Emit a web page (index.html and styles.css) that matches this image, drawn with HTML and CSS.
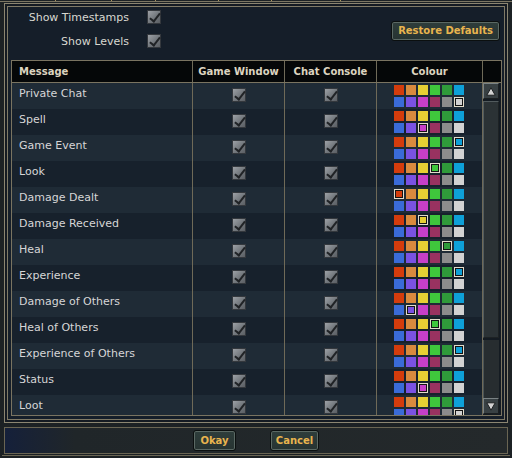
FILE: index.html
```html
<!DOCTYPE html>
<html>
<head>
<meta charset="utf-8">
<link rel="stylesheet" href="styles.css">
</head>
<body>
<div class="tabs"><i></i><i></i><i></i><i></i><i></i><i></i></div>
<div class="window">
  <div class="panel">
    <div class="top">
      <div class="opts">
        <span class="lbl">Show Timestamps</span><span class="cb"></span>
        <span class="lbl">Show Levels</span><span class="cb"></span>
      </div>
      <button class="btn restore">Restore Defaults</button>
    </div>
    <div class="table">
      <div class="thead"><div>Message</div><div>Game Window</div><div>Chat Console</div><div>Colour</div><div></div></div>
      <div class="tbody">
        <div class="rows">
          <div class="row"><div class="msg">Private Chat</div><div class="c"><span class="cb"></span></div><div class="c"><span class="cb"></span></div><div class="col"><div class="pal"><i></i><i></i><i></i><i></i><i></i><i></i><i></i><i></i><i></i><i></i><i></i><i class="sel"></i></div></div></div>
          <div class="row"><div class="msg">Spell</div><div class="c"><span class="cb"></span></div><div class="c"><span class="cb"></span></div><div class="col"><div class="pal"><i></i><i></i><i></i><i></i><i></i><i></i><i></i><i></i><i class="sel"></i><i></i><i></i><i></i></div></div></div>
          <div class="row"><div class="msg">Game Event</div><div class="c"><span class="cb"></span></div><div class="c"><span class="cb"></span></div><div class="col"><div class="pal"><i></i><i></i><i></i><i></i><i></i><i class="sel"></i><i></i><i></i><i></i><i></i><i></i><i></i></div></div></div>
          <div class="row"><div class="msg">Look</div><div class="c"><span class="cb"></span></div><div class="c"><span class="cb"></span></div><div class="col"><div class="pal"><i></i><i></i><i></i><i class="sel"></i><i></i><i></i><i></i><i></i><i></i><i></i><i></i><i></i></div></div></div>
          <div class="row"><div class="msg">Damage Dealt</div><div class="c"><span class="cb"></span></div><div class="c"><span class="cb"></span></div><div class="col"><div class="pal"><i class="sel"></i><i></i><i></i><i></i><i></i><i></i><i></i><i></i><i></i><i></i><i></i><i></i></div></div></div>
          <div class="row"><div class="msg">Damage Received</div><div class="c"><span class="cb"></span></div><div class="c"><span class="cb"></span></div><div class="col"><div class="pal"><i></i><i></i><i class="sel"></i><i></i><i></i><i></i><i></i><i></i><i></i><i></i><i></i><i></i></div></div></div>
          <div class="row"><div class="msg">Heal</div><div class="c"><span class="cb"></span></div><div class="c"><span class="cb"></span></div><div class="col"><div class="pal"><i></i><i></i><i></i><i></i><i class="sel"></i><i></i><i></i><i></i><i></i><i></i><i></i><i></i></div></div></div>
          <div class="row"><div class="msg">Experience</div><div class="c"><span class="cb"></span></div><div class="c"><span class="cb"></span></div><div class="col"><div class="pal"><i></i><i></i><i></i><i></i><i></i><i class="sel"></i><i></i><i></i><i></i><i></i><i></i><i></i></div></div></div>
          <div class="row"><div class="msg">Damage of Others</div><div class="c"><span class="cb"></span></div><div class="c"><span class="cb"></span></div><div class="col"><div class="pal"><i></i><i></i><i></i><i></i><i></i><i></i><i></i><i class="sel"></i><i></i><i></i><i></i><i></i></div></div></div>
          <div class="row"><div class="msg">Heal of Others</div><div class="c"><span class="cb"></span></div><div class="c"><span class="cb"></span></div><div class="col"><div class="pal"><i></i><i></i><i></i><i class="sel"></i><i></i><i></i><i></i><i></i><i></i><i></i><i></i><i></i></div></div></div>
          <div class="row"><div class="msg">Experience of Others</div><div class="c"><span class="cb"></span></div><div class="c"><span class="cb"></span></div><div class="col"><div class="pal"><i></i><i></i><i></i><i></i><i></i><i class="sel"></i><i></i><i></i><i></i><i></i><i></i><i></i></div></div></div>
          <div class="row"><div class="msg">Status</div><div class="c"><span class="cb"></span></div><div class="c"><span class="cb"></span></div><div class="col"><div class="pal"><i></i><i></i><i></i><i></i><i></i><i></i><i></i><i></i><i class="sel"></i><i></i><i></i><i></i></div></div></div>
          <div class="row"><div class="msg">Loot</div><div class="c"><span class="cb"></span></div><div class="c"><span class="cb"></span></div><div class="col"><div class="pal"><i></i><i></i><i></i><i></i><i></i><i></i><i></i><i></i><i></i><i></i><i></i><i class="sel"></i></div></div></div>
        </div>
        <div class="scroll">
          <div class="sb"><svg width="10" height="9" viewBox="0 0 10 9"><path d="M5 0.8 L9.2 8.2 H0.8 Z" fill="#d2d2d2" stroke="#1c1f21" stroke-width="1"/></svg></div>
          <div class="thumb"></div>
          <div class="track"></div>
          <div class="sb down"><svg width="10" height="9" viewBox="0 0 10 9"><path d="M5 8.2 L9.2 0.8 H0.8 Z" fill="#d2d2d2" stroke="#1c1f21" stroke-width="1"/></svg></div>
        </div>
      </div>
    </div>
  </div>
</div>
<div class="bottom">
  <button class="btn ok">Okay</button>
  <button class="btn cancel">Cancel</button>
</div>
<div class="footline"></div>
</body>
</html>
```
FILE: styles.css
```css
* { box-sizing: border-box; margin: 0; padding: 0; }

body {
  width: 512px;
  height: 458px;
  overflow: hidden;
  background: #1c2124;
  font-family: "DejaVu Sans", sans-serif;
  font-size: 11px;
  color: #d4d4d4;
}

.tabs {
  display: flex;
  height: 2px;
  border-bottom: 1px solid #7c7663;
}
.tabs i { display: block; height: 1px; border-right: 1px solid #a8945a; }
.tabs i:nth-child(1) { width: 56px; }
.tabs i:nth-child(2) { width: 56px; }
.tabs i:nth-child(3) { width: 44px; }
.tabs i:nth-child(4) { width: 63px; }
.tabs i:nth-child(5) { width: 53px; }
.tabs i:nth-child(6) { width: 69px; }

.window {
  margin: 1px 0 0 4px;
  width: 504px;
  height: 420px;
  border: 1px solid #8b8571;
  padding: 2px;
  background: #141a22;
}

.panel {
  height: 100%;
  border: 1px solid #807a66;
  background: #151e29;
  padding: 0 2px 3px 3px;
  display: flex;
  flex-direction: column;
}

.top {
  height: 53px;
  display: flex;
  justify-content: space-between;
  align-items: flex-start;
}

.opts {
  display: grid;
  grid-template-columns: 118px 14px;
  column-gap: 18px;
  row-gap: 8px;
  padding-top: 3px;
}

.lbl {
  text-align: right;
  line-height: 16px;
  color: #d8d8d0;
}

.btn {
  font-family: "DejaVu Sans", sans-serif;
  font-weight: bold;
  font-size: 10px;
  color: #e8b44e;
  background: linear-gradient(#2e3d3b, #273432);
  border: 1px solid #0b0f0f;
  border-radius: 3px;
  box-shadow: inset 0 0 0 1px #5b6964;
  text-align: center;
  padding: 0;
}

.restore {
  margin: 14px 2px 0 0;
  width: 109px;
  height: 20px;
  line-height: 18px;
}

.table {
  width: 491px;
  height: 356px;
  border: 1px solid #7a7461;
  display: flex;
  flex-direction: column;
}

.thead {
  display: grid;
  grid-template-columns: 181px 92px 92px 106px 18px;
  height: 22px;
  border-bottom: 1px solid #7a7461;
  background: #050708;
}
.thead div {
  border-right: 1px solid #6f6a58;
  font-weight: bold;
  font-size: 10px;
  line-height: 21px;
  text-align: center;
  color: #dcd4c0;
}
.thead div:first-child { text-align: left; padding-left: 7px; }
.thead div:last-child { border-right: 0; }

.tbody {
  display: flex;
  height: 332px;
}

.rows {
  width: 471px;
  overflow: hidden;
}

.row {
  display: grid;
  grid-template-columns: 181px 92px 92px 106px;
  height: 26px;
  background: #1f2b36;
}
.row:nth-child(even) { background: #17212c; }
.row > div { border-right: 1px solid #6f6a58; }

.msg {
  padding: 4px 0 0 7px;
  line-height: 13px;
  color: #d6d6d6;
  white-space: nowrap;
}

.c {
  display: flex;
  justify-content: center;
  padding-top: 5px;
}

.col {
  padding: 2px 0 0 17px;
}

.pal {
  display: grid;
  grid-template-columns: repeat(6, 10px);
  grid-auto-rows: 10px;
  gap: 2px;
}
.pal i { display: block; width: 10px; height: 10px; }
.pal i:nth-child(1) { background: #d43c0c; }
.pal i:nth-child(2) { background: #d98a3e; }
.pal i:nth-child(3) { background: #e6cf34; }
.pal i:nth-child(4) { background: #3fc73c; }
.pal i:nth-child(5) { background: #2f9a3a; }
.pal i:nth-child(6) { background: #0ea0d8; }
.pal i:nth-child(7) { background: #3a6bd8; }
.pal i:nth-child(8) { background: #7a52e2; }
.pal i:nth-child(9) { background: #c63fc8; }
.pal i:nth-child(10) { background: #993260; }
.pal i:nth-child(11) { background: #8c8c8c; }
.pal i:nth-child(12) { background: #d2d2d2; }
.pal i.sel { box-shadow: inset 0 0 0 1px #e2dccb, inset 0 0 0 2px #141414; }

.cb {
  display: block;
  position: relative;
  width: 14px;
  height: 14px;
  border: 1px solid #34383d;
  background: linear-gradient(135deg, #9da1a6, #72777c 55%, #5b5f64);
}
.cb::after {
  content: "";
  position: absolute;
  left: 4px;
  top: 0;
  width: 4px;
  height: 9px;
  border: solid #202326;
  border-width: 0 2px 2px 0;
  transform: rotate(38deg);
}

.scroll {
  width: 18px;
  padding-right: 2px;
  display: flex;
  flex-direction: column;
  background: #141b22;
}

.sb {
  width: 16px;
  height: 16px;
  flex-shrink: 0;
  background: #384043;
  border: 1px solid;
  border-color: #7a8284 #1b1f21 #1b1f21 #7a8284;
  display: flex;
  align-items: center;
  justify-content: center;
}
.sb.down { margin-bottom: 1px; }

.thumb {
  height: 237px;
  flex-shrink: 0;
  margin: 2px 0;
  background: #2b3235;
  border: 1px solid;
  border-color: #525b5e #1d2224 #1d2224 #525b5e;
}

.track {
  flex: 1;
  background: #272d30;
  border-left: 1px solid #4a5356;
}

.bottom {
  margin: 4px 0 0 4px;
  width: 504px;
  height: 27px;
  border: 1px solid #6a6553;
  background: linear-gradient(90deg, #15203a, #202629 70px, #24292b);
  display: flex;
  justify-content: center;
  gap: 34px;
  padding-top: 2px;
}
.bottom .btn { height: 21px; line-height: 19px; }
.ok { width: 43px; }
.cancel { width: 49px; }

.footline {
  margin: 1px 0 0 2px;
  width: 508px;
  height: 1px;
  background: #6b6654;
}
```
